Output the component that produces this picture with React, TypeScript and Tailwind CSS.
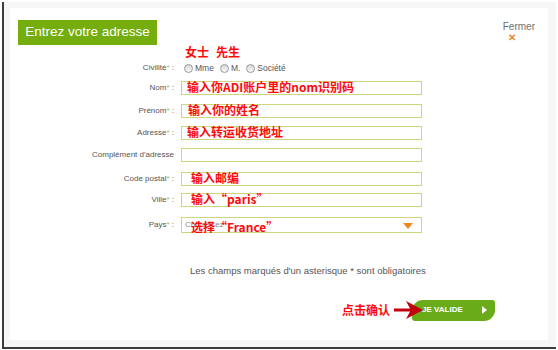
import React from "react";

const red = "font-['Noto_Sans_CJK_SC','Liberation_Sans',sans-serif] font-bold text-[#ff0a0a] text-[12px] leading-none";

function Label({ text, star = true }: { text: string; star?: boolean }) {
  return (
    <div className="w-[166px] shrink-0 pr-[2px] text-right text-[8px] text-[#555] leading-none">
      {text}
      {star && <span className="text-[#9cc24a]">*</span>}
      {star ? " :" : ""}
    </div>
  );
}

function Field({ label, children, mt, star = true }: { label: string; children?: React.ReactNode; mt: string; star?: boolean }) {
  return (
    <div className={`flex items-center ${mt}`}>
      <Label text={label} star={star} />
      <div className="ml-[5px] flex h-[14px] w-[241px] items-end border border-[#cdd67c] bg-white pl-[5px] pb-[1px]">
        {children}
      </div>
    </div>
  );
}

function Radio({ label }: { label: string }) {
  return (
    <div className="flex items-center gap-[2px]">
      <span className="inline-block h-[9px] w-[9px] rounded-full border border-[#999] bg-gradient-to-b from-[#d8d8d8] to-[#fafafa]" />
      <span className="text-[8.5px] text-[#555] leading-none">{label}</span>
    </div>
  );
}

export default function App() {
  return (
    <div className="h-[350px] w-[558px] bg-white font-['Liberation_Sans',Arial,sans-serif]">
      <div className="ml-[2px] pt-[2px]">
        <div className="h-[347px] w-[554px] border-b-2 border-l-2 border-[#3c3c3c] bg-[#f6f6f6] pl-[6px] pt-[6px]">
          <div className="relative h-[332px] w-[538px] bg-white">
            {/* header */}
            <div className="flex items-start justify-between pl-[8px] pt-[12px] pr-[13px]">
              <div className="flex h-[25px] w-[139px] items-center justify-center bg-[#74ad0c] font-['Liberation_Sans',Arial,sans-serif] text-[13.5px] text-white">
                Entrez votre adresse
              </div>
              <div className="flex flex-col items-start pt-[2px]">
                <span className="text-[10px] leading-none text-[#707070]">Fermer</span>
                <span className="ml-[5px] mt-[1px] text-[10px] font-bold leading-none text-[#e88a2a]">✕</span>
              </div>
            </div>

            {/* form */}
            <div className="mt-[1px] flex flex-col">
              <div className="flex">
                <div className="ml-[175px] flex h-[12px] gap-[7px] items-center">
                  <span className={red}>女士</span>
                  <span className={red}>先生</span>
                </div>
              </div>
              <div className="mt-[3px] flex h-[14px] items-center">
                <Label text="Civilité" />
                <div className="ml-[8px] flex items-center gap-[6px]">
                  <Radio label="Mme" />
                  <Radio label="M." />
                  <Radio label="Société" />
                </div>
              </div>
              <Field label="Nom" mt="mt-[6px]">
                <span className={red}>输入你ADI账户里的nom识别码</span>
              </Field>
              <Field label="Prénom" mt="mt-[9px]">
                <span className={`${red} ml-[1px]`}>输入你的姓名</span>
              </Field>
              <Field label="Adresse" mt="mt-[8px]">
                <span className={red}>输入转运收货地址</span>
              </Field>
              <Field label="Complément d'adresse" mt="mt-[8px]" star={false} />
              <Field label="Code postal" mt="mt-[10px]">
                <span className={`${red} ml-[4px]`}>输入邮编</span>
              </Field>
              <Field label="Ville" mt="mt-[7px]">
                <span className={`${red} ml-[4px]`}>输入“paris”</span>
              </Field>
              <div className="mt-[10px] flex items-center">
                <Label text="Pays" />
                <div className="relative ml-[5px] flex h-[16px] w-[241px] items-center border border-[#cdd67c] bg-white pl-[3px]">
                  <span className="text-[8px] text-[#888] leading-none">Choisissez</span>
                  <span className={`${red} absolute left-[9px] top-[3px]`}>选择“France”</span>
                  <svg className="absolute right-[8px] top-[5px]" width="10" height="6" viewBox="0 0 10 6">
                    <polygon points="0,0 10,0 5,6" fill="#ec8a1f" />
                  </svg>
                </div>
              </div>
            </div>

            <div className="mt-[33px] pl-[180px] text-[9.5px] text-[#555] leading-none">
              Les champs marqués d'un asterisque * sont obligatoires
            </div>

            <div className="mt-[24px] flex items-center pl-[332px]">
              <span className={red}>点击确认</span>
              <svg className="ml-[4px] -mr-[12px] relative z-10" width="30" height="20" viewBox="0 0 30 20">
                <polygon points="0,8.5 16,8.5 12,1 29,10 12,19 16,11.5 0,11.5" fill="#c3000e" />
              </svg>
              <div className="flex h-[21px] w-[83px] items-center justify-between rounded-tl-[11px] rounded-br-[11px] rounded-tr-[3px] rounded-bl-[3px] bg-[#6aab19] pl-[10px] pr-[8px]">
                <span className="text-[8px] font-bold text-white leading-none">JE VALIDE</span>
                <svg width="5" height="8" viewBox="0 0 5 8">
                  <polygon points="0,0 5,4 0,8" fill="#fff" />
                </svg>
              </div>
            </div>
          </div>
        </div>
      </div>
    </div>
  );
}
